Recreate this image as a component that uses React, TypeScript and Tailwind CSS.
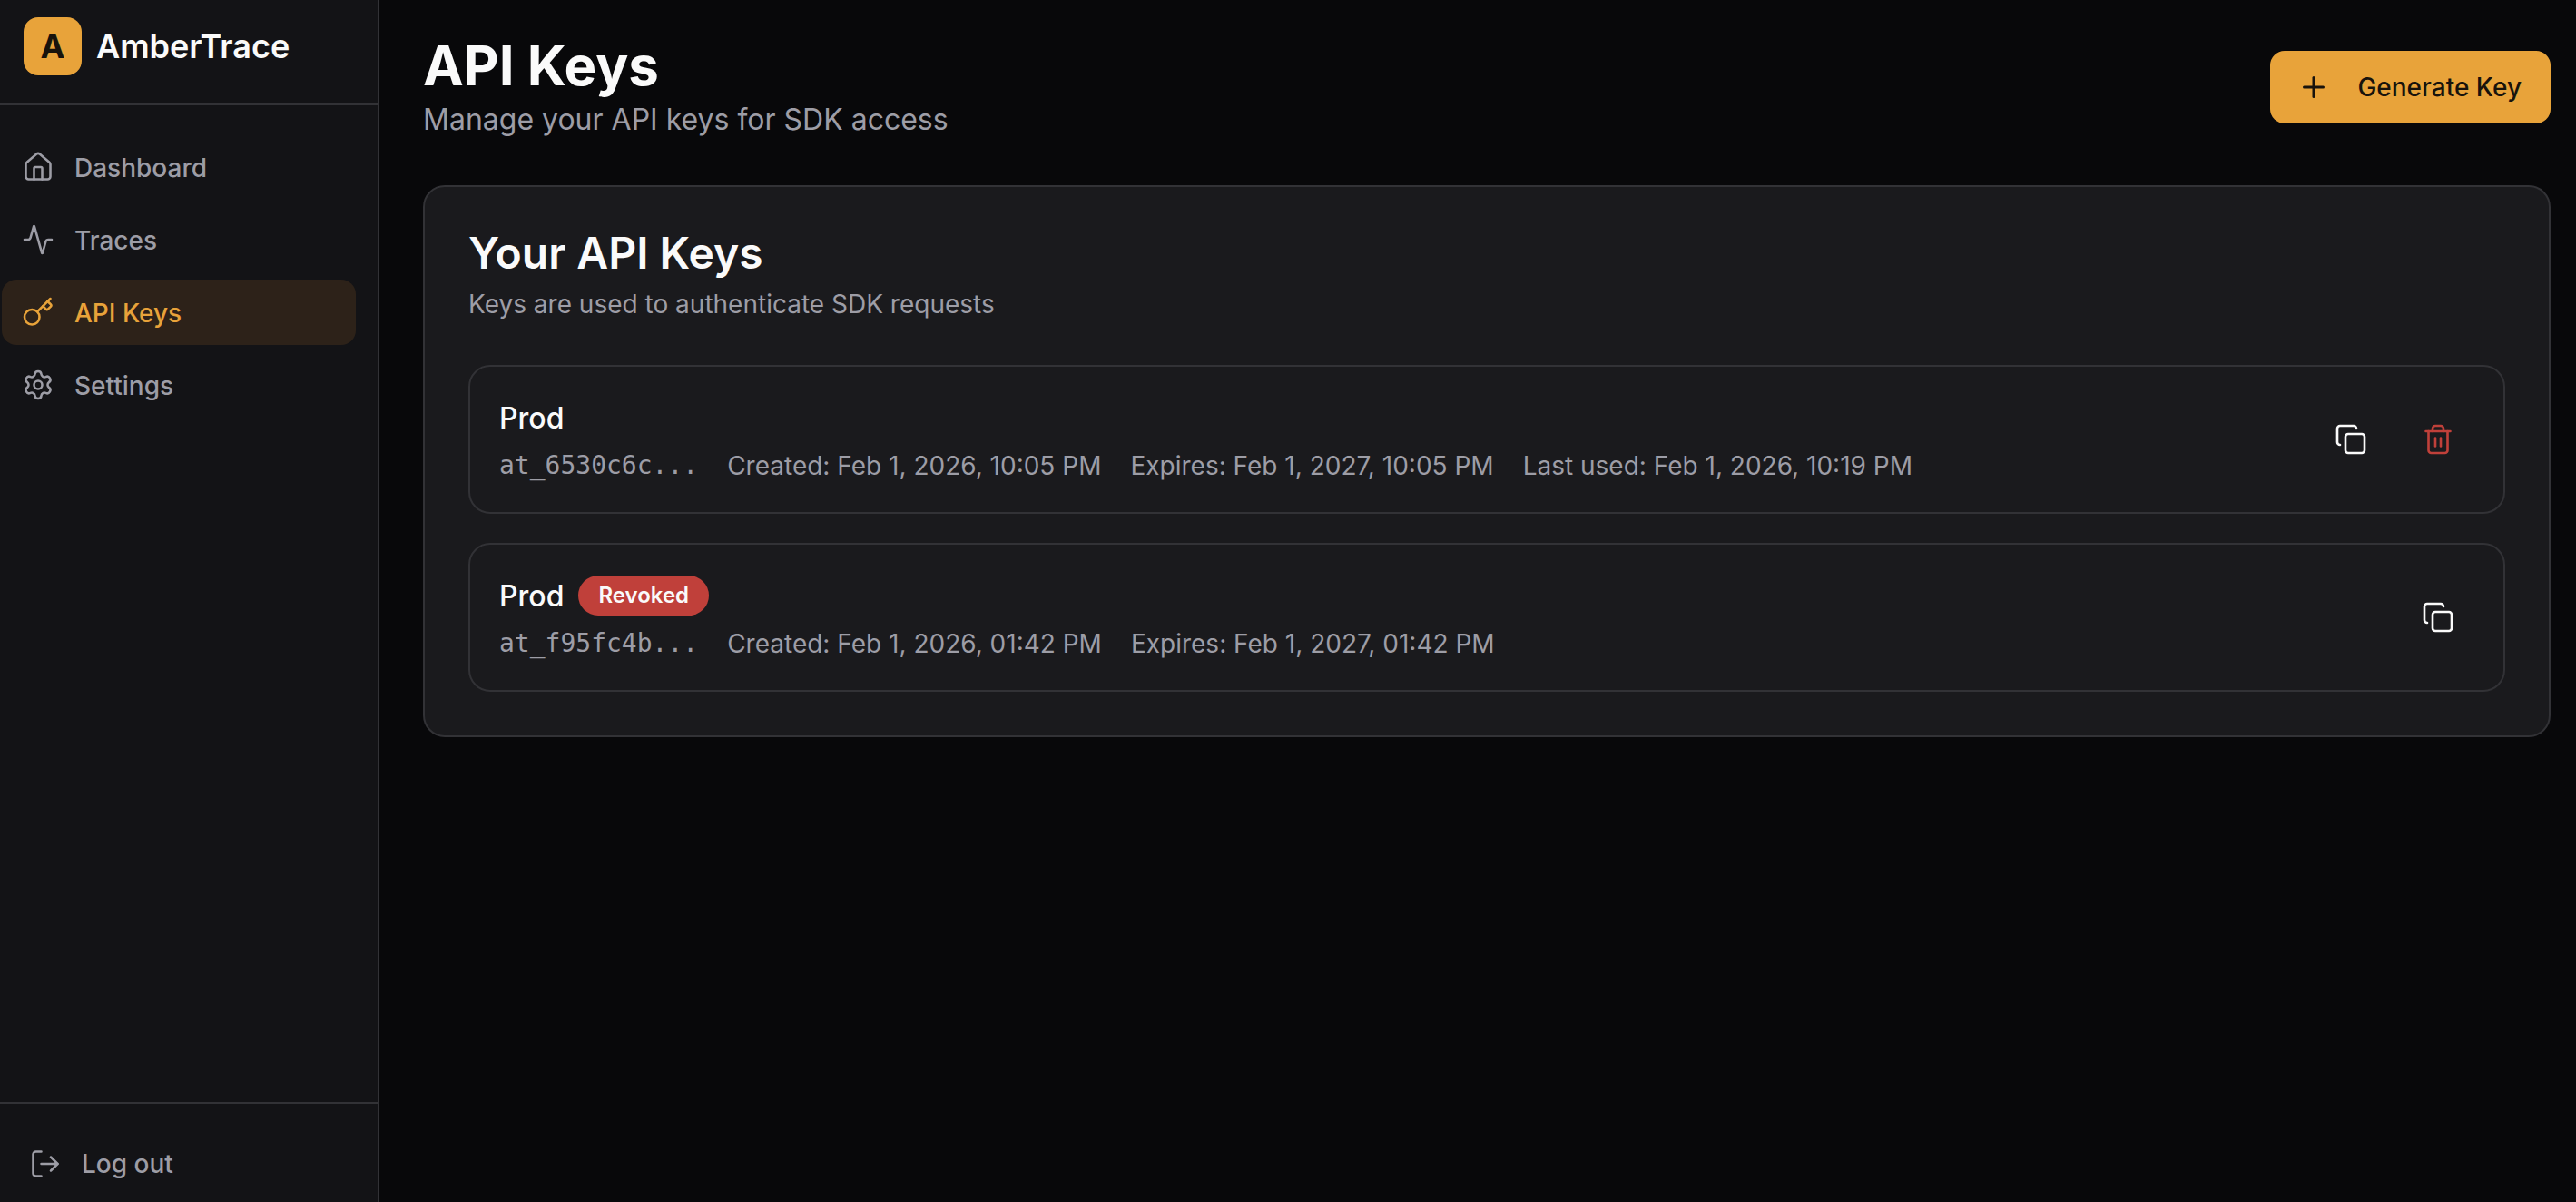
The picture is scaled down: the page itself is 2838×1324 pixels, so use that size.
import { Home, Activity, Key, Settings, LogOut, Plus, Copy, Trash2 } from "lucide-react";

const nav = [
  { label: "Dashboard", Icon: Home },
  { label: "Traces", Icon: Activity },
  { label: "API Keys", Icon: Key, active: true },
  { label: "Settings", Icon: Settings },
];

const keys = [
  {
    name: "Prod",
    revoked: false,
    prefix: "at_6530c6c...",
    meta: ["Created: Feb 1, 2026, 10:05 PM", "Expires: Feb 1, 2027, 10:05 PM", "Last used: Feb 1, 2026, 10:19 PM"],
  },
  {
    name: "Prod",
    revoked: true,
    prefix: "at_f95fc4b...",
    meta: ["Created: Feb 1, 2026, 01:42 PM", "Expires: Feb 1, 2027, 01:42 PM"],
  },
];

export default function App() {
  return (
    <div className="flex h-screen w-full overflow-hidden bg-[#08080a] font-['Inter',sans-serif] text-[#fafafa]">
      <aside className="flex h-full w-[418px] shrink-0 flex-col border-r-2 border-[#323236] bg-[#131316]">
        <div className="flex h-[116px] shrink-0 items-center gap-[16px] border-b-2 border-[#323236] pb-[22px] pl-[26px] pt-[10px]">
          <div className="flex h-[64px] w-[64px] items-center justify-center rounded-[16px] bg-[#e8a33a] text-[36px] font-bold text-[#18130c]">
            A
          </div>
          <span className="text-[36px] font-semibold leading-[48px] text-[#fafafa]">AmberTrace</span>
        </div>
        <nav className="flex flex-1 flex-col gap-[8px] pb-[32px] pl-[2px] pr-[24px] pt-[32px]">
          {nav.map(({ label, Icon, active }) => (
            <div
              key={label}
              className={
                active
                  ? "flex h-[72px] items-center gap-[22px] rounded-[16px] bg-[#2d2219] pl-[22px] text-[28px] font-medium text-[#e8a33a]"
                  : "flex h-[72px] items-center gap-[22px] rounded-[16px] pl-[22px] text-[28px] font-medium text-[#9d9da6]"
              }
            >
              <Icon size={36} strokeWidth={1.7} />
              <span className="pt-[2px]">{label}</span>
            </div>
          ))}
        </nav>
        <div className="h-[110px] shrink-0 border-t-2 border-[#323236] pl-[32px] pt-[26px]">
          <div className="flex h-[80px] items-center gap-[22px] text-[28px] font-medium text-[#9d9da6]">
            <LogOut size={36} strokeWidth={1.7} />
            <span>Log out</span>
          </div>
        </div>
      </aside>

      <main className="min-w-0 flex-1 pl-[48px] pr-[28px] pt-[32px]">
        <header className="flex items-start justify-between">
          <div>
            <h1 className="text-[60px] font-bold leading-[80px] text-[#fafafa]">API Keys</h1>
            <p className="text-[32px] leading-[40px] text-[#9d9da6]">Manage your API keys for SDK access</p>
          </div>
          <button className="mt-[24px] flex h-[80px] items-center gap-[30px] rounded-[16px] bg-[#e8a33a] pl-[30px] pr-[32px] text-[28px] font-medium text-[#18130c]">
            <Plus size={36} strokeWidth={2} />
            <span>Generate Key</span>
          </button>
        </header>

        <section className="mt-[52px] rounded-[24px] border-2 border-[#323236] bg-[#1a1a1d] p-[48px]">
          <h2 className="pt-[2px] text-[48px] font-semibold leading-[46px] text-[#fafafa]">Your API Keys</h2>
          <p className="mt-[14px] text-[28px] leading-[38px] text-[#9d9da6]">Keys are used to authenticate SDK requests</p>

          <div className="mt-[48px] flex flex-col gap-[32px]">
            {keys.map((k) => (
              <div
                key={k.prefix}
                className="flex items-center justify-between rounded-[24px] border-2 border-[#323236] p-[32px]"
              >
                <div>
                  <div className="flex h-[48px] items-center gap-[16px]">
                    <span className="pt-[2px] text-[32px] font-medium leading-[46px] text-[#fafafa]">{k.name}</span>
                    {k.revoked && (
                      <span className="flex h-[44px] items-center rounded-full bg-[#c0403a] px-[22px] text-[24px] font-semibold text-[#fafafa]">
                        Revoked
                      </span>
                    )}
                  </div>
                  <div className="mt-[8px] flex h-[40px] items-center gap-[32px] pt-[2px] text-[28px] leading-[38px] text-[#9d9da6]">
                    <span className="font-['DejaVu_Sans_Mono',monospace]">{k.prefix}</span>
                    {k.meta.map((m) => (
                      <span key={m}>{m}</span>
                    ))}
                  </div>
                </div>
                <div className="flex items-center gap-[16px]">
                  <button className="flex h-[80px] w-[80px] items-center justify-center text-[#fafafa]">
                    <Copy size={36} strokeWidth={1.75} />
                  </button>
                  {!k.revoked && (
                    <button className="flex h-[80px] w-[80px] items-center justify-center text-[#c0403a]">
                      <Trash2 size={36} strokeWidth={1.75} />
                    </button>
                  )}
                </div>
              </div>
            ))}
          </div>
        </section>
      </main>
    </div>
  );
}
